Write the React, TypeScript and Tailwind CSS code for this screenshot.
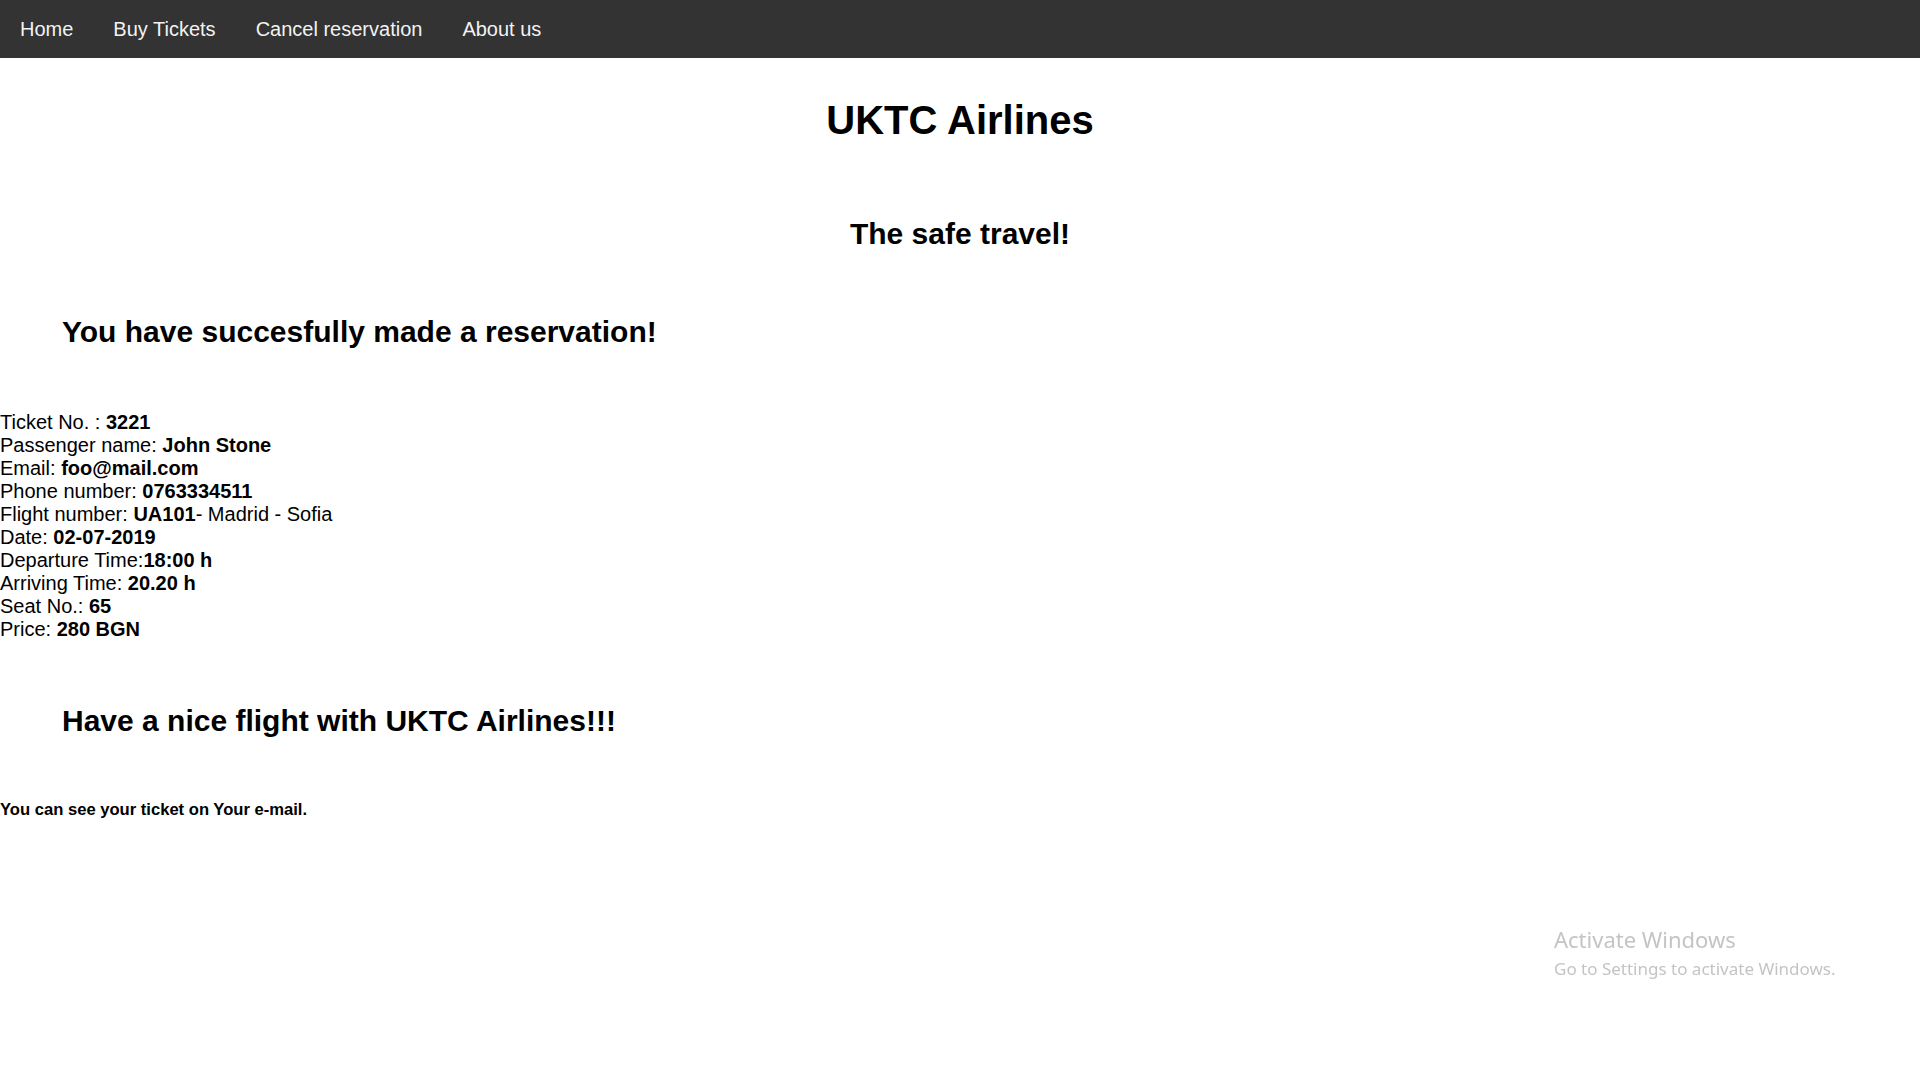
import React from 'react';

const navItems = ['Home', 'Buy Tickets', 'Cancel reservation', 'About us'];

const details: { label: string; value: string; rest?: string }[] = [
  { label: 'Ticket No. : ', value: '3221' },
  { label: 'Passenger name: ', value: 'John Stone' },
  { label: 'Email: ', value: 'foo@mail.com' },
  { label: 'Phone number: ', value: '0763334511' },
  { label: 'Flight number: ', value: 'UA101', rest: '- Madrid - Sofia' },
  { label: 'Date: ', value: '02-07-2019' },
  { label: 'Departure Time:', value: '18:00 h' },
  { label: 'Arriving Time: ', value: '20.20 h' },
  { label: 'Seat No.: ', value: '65' },
  { label: 'Price: ', value: '280 BGN' },
];

export default function App() {
  return (
    <div className="min-h-screen bg-white text-black font-['Liberation_Sans',Arial,sans-serif]">
      {/* Top navigation */}
      <nav className="flex bg-[#333333] h-[58px] items-center">
        {navItems.map((item) => (
          <a key={item} href="#" className="px-5 text-[20px] leading-[23px] text-[#f2f2f2]">
            {item}
          </a>
        ))}
      </nav>

      <h1 className="mt-[39px] text-center text-[40px] leading-[46px] font-bold">UKTC Airlines</h1>
      <h2 className="mt-[74px] text-center text-[30px] leading-[34px] font-bold">The safe travel!</h2>

      <h2 className="mt-[64px] pl-[62px] text-[30px] leading-[34px] font-bold">
        You have succesfully made a reservation!
      </h2>

      {/* Reservation details */}
      <div className="mt-[62px] text-[20px] leading-[23px]">
        {details.map((d) => (
          <div key={d.label}>
            {d.label}
            <b>{d.value}</b>
            {d.rest}
          </div>
        ))}
      </div>

      <h2 className="mt-[63px] pl-[62px] text-[30px] leading-[34px] font-bold">
        Have a nice flight with UKTC Airlines!!!
      </h2>

      <h5 className="mt-[62px] text-[16.6px] leading-[19px] font-bold">You can see your ticket on Your e-mail.</h5>

      {/* Windows activation watermark */}
      <div className="fixed left-[1554px] top-[924px] text-[#c4c4c4] font-['Noto_Sans','Open_Sans',sans-serif] pointer-events-none">
        <div className="text-[22px] leading-[30px]">Activate Windows</div>
        <div className="text-[17px] leading-[22px] mt-[4px]">Go to Settings to activate Windows.</div>
      </div>
    </div>
  );
}
